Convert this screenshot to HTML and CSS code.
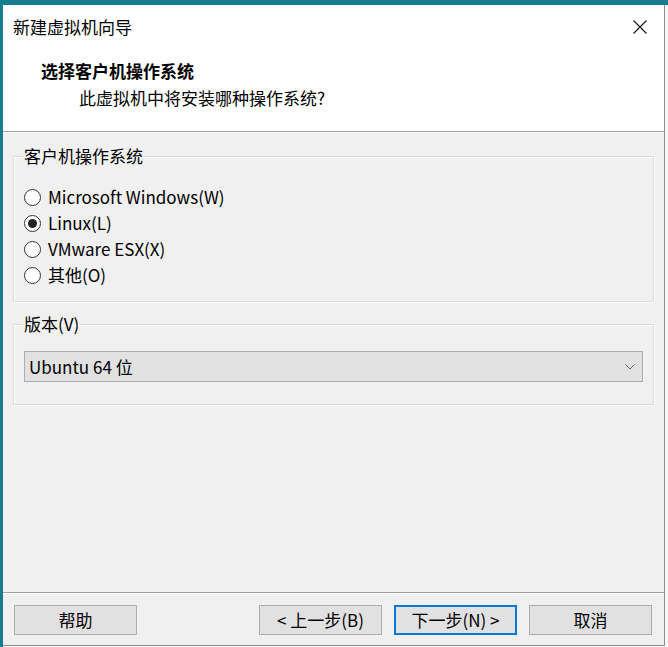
FILE: index.html
```html
<!DOCTYPE html>
<html lang="zh-CN">
<head>
    <meta charset="UTF-8">
    <meta name="viewport" content="width=device-width, initial-scale=1.0">
    <title>新建虚拟机向导</title>
    <link rel="stylesheet" href="styles.css">
</head>
<body>
    <div class="window">
        <div class="dialog">
            <div class="titlebar">
                <span class="title">新建虚拟机向导</span>
                <svg class="close" width="16" height="16" viewBox="0 0 16 16">
                    <path d="M1.5 1.5 L14.5 14.5 M14.5 1.5 L1.5 14.5" stroke="#1a1a1a" stroke-width="1.2" fill="none"/>
                </svg>
            </div>
            <div class="header">
                <div class="heading">选择客户机操作系统</div>
                <div class="subheading">此虚拟机中将安装哪种操作系统?</div>
            </div>

            <div class="content">
                <fieldset class="group">
                    <legend>客户机操作系统</legend>
                    <div class="options">
                        <label class="option"><input type="radio" name="os"> Microsoft Windows(W)</label>
                        <label class="option"><input type="radio" name="os" checked> Linux(L)</label>
                        <label class="option"><input type="radio" name="os"> VMware ESX(X)</label>
                        <label class="option"><input type="radio" name="os"> 其他(O)</label>
                    </div>
                </fieldset>

                <fieldset class="group version">
                    <legend>版本(V)</legend>
                    <div class="select">
                        <span>Ubuntu 64 位</span>
                        <svg class="chevron" width="10" height="6" viewBox="0 0 10 6">
                            <path d="M0.5 0.5 L5 5 L9.5 0.5" stroke="#606060" stroke-width="1" fill="none"/>
                        </svg>
                    </div>
                </fieldset>
            </div>

            <div class="footer">
                <button class="btn">帮助</button>
                <div class="nav">
                    <button class="btn">&lt; 上一步(B)</button>
                    <button class="btn default">下一步(N) &gt;</button>
                    <button class="btn">取消</button>
                </div>
            </div>
        </div>
    </div>
</body>
</html>
```

FILE: styles.css
```css
html, body {
    margin: 0;
    padding: 0;
}
body {
    width: 668px;
    height: 647px;
    background-color: #177d8c;
    font-family: "Noto Sans CJK SC", sans-serif;
    font-size: 17px;
    color: #000;
    overflow: hidden;
}

.window {
    margin: 5px 0 0 3px;
    height: 642px;
    padding: 0 3px 2px 0;
    background-color: #f6f6f6;
    box-sizing: border-box;
}
.dialog {
    height: 640px;
    background-color: #f0f0f0;
    border-right: 1px solid #8c8c8c;
    border-bottom: 1px solid #8c8c8c;
    display: flex;
    flex-direction: column;
}

.titlebar {
    height: 44px;
    background-color: #fff;
    display: flex;
    align-items: center;
    justify-content: space-between;
    padding: 0 16px 0 10px;
}
.title {
    font-size: 17px;
    line-height: 24px;
}
.close {
    display: block;
}

.header {
    height: 82px;
    background-color: #fff;
    border-bottom: 1px solid #a0a0a0;
    box-shadow: 0 1px 0 #fff;
    padding-left: 38px;
}
.heading {
    font-weight: bold;
    line-height: 24px;
    padding-top: 10px;
}
.subheading {
    line-height: 24px;
    padding: 3px 0 0 38px;
}

.content {
    flex: 1;
    padding-top: 12px;
}
.group {
    margin: 0 10px 10px 10px;
    padding: 0 10px 0 10px;
    border: 1px solid #dadada;
    box-shadow: inset 1px 1px 0 #fff, 1px 1px 0 #fff;
}
.group legend {
    padding: 0 1px;
    margin-left: -1px;
    line-height: 24px;
}
.options {
    padding: 16px 0 13px 0;
}
.option {
    display: flex;
    align-items: center;
    height: 26px;
    line-height: 26px;
}
.option input {
    appearance: none;
    -webkit-appearance: none;
    margin: 0 7px 0 0;
    width: 17px;
    height: 17px;
    border: 1px solid #333;
    border-radius: 50%;
    background-color: #fff;
    box-sizing: border-box;
    display: grid;
    place-content: center;
}
.option input:checked::before {
    content: "";
    width: 9px;
    height: 9px;
    border-radius: 50%;
    background-color: #222;
}

.version {
    padding-top: 15px;
    padding-bottom: 22px;
}
.select {
    height: 31px;
    box-sizing: border-box;
    border: 1px solid #adadad;
    background-color: #e1e1e1;
    display: flex;
    align-items: center;
    justify-content: space-between;
    padding: 0 7px 0 4px;
    line-height: 24px;
}
.chevron {
    display: block;
}

.footer {
    height: 50px;
    border-top: 1px solid #a0a0a0;
    box-shadow: inset 0 1px 0 #fff;
    display: flex;
    align-items: center;
    justify-content: space-between;
    padding: 2px 12px 0 11px;
}
.nav {
    display: flex;
    gap: 12px;
}
.btn {
    width: 123px;
    height: 30px;
    border: 1px solid #adadad;
    background-color: #e1e1e1;
    font-family: inherit;
    font-size: 17px;
    line-height: 24px;
    color: #000;
    padding: 0;
}
.btn.default {
    border: 2px solid #0078d7;
}
```
